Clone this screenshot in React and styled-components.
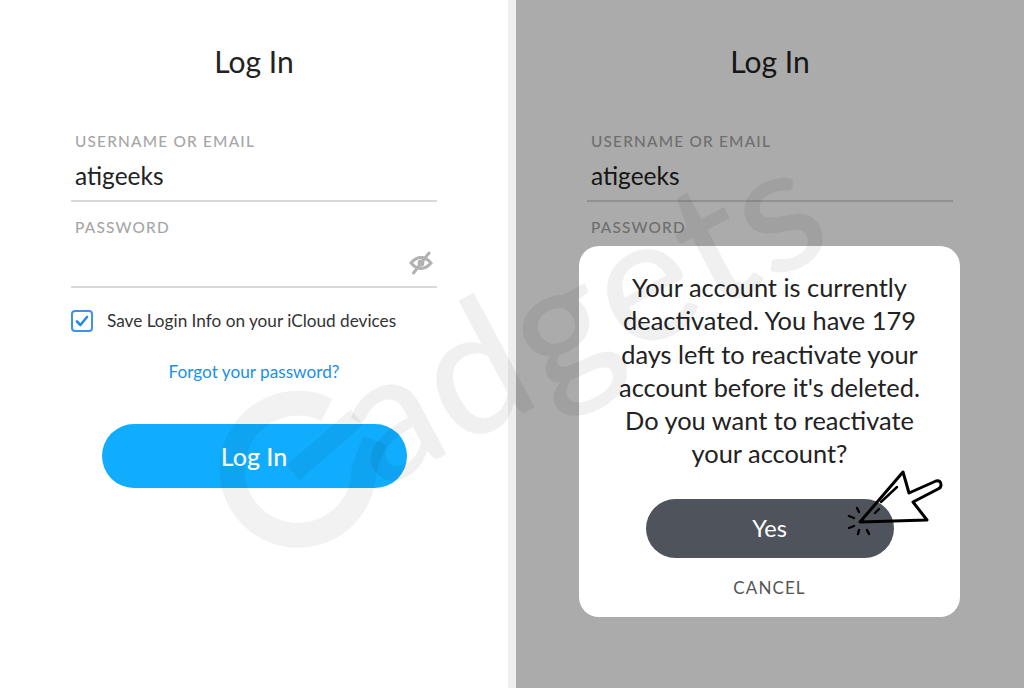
import React from 'react'
import styled,{createGlobalStyle} from 'styled-components'

const Global = createGlobalStyle`
    html,body{
        margin:0;
        padding:0;
        background:#fff;
    }
    body{
        font-family:Lato,"Open Sans",sans-serif;
        color:#222;
    }
`

const Page = styled.div`
    position:relative;
    width:1024px;
    height:688px;
    overflow:hidden;
    display:grid;
    grid-template-columns:508px 8px 508px;
    background:#fff;
`

const Panel = styled.section`
    position:relative;
    height:688px;
    display:flex;
    flex-direction:column;
    align-items:center;
    padding-top:41px;
    box-sizing:border-box;
`

const Divider = styled.div`
    background:#efefef;
`

const Title = styled.h1`
    margin:0 0 50px;
    font-size:30px;
    line-height:40px;
    font-weight:400;
    color:#222;
`

const Form = styled.div`
    width:366px;
    display:flex;
    flex-direction:column;
`

const Label = styled.div`
    padding-left:4px;
    font-size:15.4px;
    line-height:20px;
    letter-spacing:1.2px;
    color:#a6a6a6;
    font-weight:500;
`

const Field = styled.div`
    height:49px;
    margin-bottom:15px;
    padding:0 4px;
    display:flex;
    align-items:center;
    justify-content:space-between;
    border-bottom:2px solid #d8d8d8;
    font-size:24.5px;
    color:#222;
`

const EyeSlot = styled.div`
    margin-left:auto;
    margin-top:3px;
    display:flex;
`

const SaveRow = styled.label`
    display:flex;
    align-items:center;
    gap:14px;
    margin-top:7px;
    font-size:17.2px;
    line-height:22px;
    color:#333;
`

const Check = styled.span`
    width:18px;
    height:18px;
    border:2px solid #3d94e6;
    border-radius:4px;
    display:flex;
    align-items:center;
    justify-content:center;
`

const Forgot = styled.a`
    margin-top:29px;
    text-align:center;
    font-size:17.2px;
    line-height:22px;
    color:#1c90e4;
`

const LoginButton = styled.button`
    align-self:center;
    width:305px;
    height:64px;
    margin-top:41px;
    border:0;
    border-radius:32px;
    background:#10adff;
    color:#fff;
    font:500 25px Lato,sans-serif;
`

const Scrim = styled.div`
    position:absolute;
    inset:0;
    background:rgba(0,0,0,.33);
`

const Dialog = styled.div`
    position:absolute;
    left:63px;
    top:246px;
    width:381px;
    height:371px;
    border-radius:20px;
    background:#fff;
    display:flex;
    flex-direction:column;
    align-items:center;
    padding-top:25px;
    box-sizing:border-box;
`

const Message = styled.p`
    margin:0;
    text-align:center;
    font-size:25.4px;
    line-height:33.3px;
    color:#222;
`

const YesButton = styled.button`
    width:248px;
    height:59px;
    margin-top:28px;
    border:0;
    border-radius:30px;
    background:#4f545c;
    color:#fff;
    font:400 23.5px Lato,sans-serif;
`

const Cancel = styled.div`
    margin-top:19px;
    font-size:17px;
    line-height:22px;
    letter-spacing:1.1px;
    color:#555;
`

const Pointer = styled.svg`
    position:absolute;
    left:845px;
    top:468px;
`

const Watermark = styled.div`
    position:absolute;
    inset:0;
    pointer-events:none;
`

const WatermarkRing = styled.svg`
    position:absolute;
    left:212px;
    top:378px;
`

const WatermarkText = styled.div`
    position:absolute;
    left:388px;
    top:332px;
    font-size:176px;
    line-height:176px;
    font-weight:500;
    letter-spacing:2px;
    color:rgba(0,0,0,.06);
    transform:rotate(-28deg);
    transform-origin:0 100%;
    white-space:nowrap;
`

const EyeOff = () => (
    <svg width="24" height="24" viewBox="0 0 24 24" fill="none" stroke="#b2b2b2" strokeWidth="3" strokeLinecap="round">
        <path d="M2 12C5.5 8 8.6 6.6 12 6.6S18.500 8 22 12C18.500 16 15.400 17.400 12 17.400S5.500 16 2 12Z"/>
        <circle cx="12" cy="12" r="3.4" fill="#b2b2b2" stroke="none"/>
        <path d="M20 2L4.500 22"/>
    </svg>
)

const LoginForm = () => (
    <>
        <Title>Log In</Title>
        <Form>
            <Label>USERNAME OR EMAIL</Label>
            <Field>atigeeks</Field>
            <Label>PASSWORD</Label>
            <Field>
                <EyeSlot><EyeOff/></EyeSlot>
            </Field>
            <SaveRow>
                <Check>
                    <svg width="14" height="12" viewBox="0 0 14 12" fill="none" stroke="#2a8be6" strokeWidth="2.6" strokeLinecap="round" strokeLinejoin="round">
                        <path d="M2 6.500L5.400 10L12 2"/>
                    </svg>
                </Check>
                Save Login Info on your iCloud devices
            </SaveRow>
            <Forgot>Forgot your password?</Forgot>
            <LoginButton>Log In</LoginButton>
        </Form>
    </>
)

const App = () => {
    return(
        <React.Fragment>
            <Global/>
            <Page>
                <Panel>
                    <LoginForm/>
                </Panel>
                <Divider/>
                <Panel>
                    <LoginForm/>
                    <Scrim/>
                    <Dialog>
                        <Message>
                            Your account is currently<br/>
                            deactivated. You have 179<br/>
                            days left to reactivate your<br/>
                            account before it's deleted.<br/>
                            Do you want to reactivate<br/>
                            your account?
                        </Message>
                        <YesButton>Yes</YesButton>
                        <Cancel>CANCEL</Cancel>
                    </Dialog>
                </Panel>
                <Pointer width="100" height="70" viewBox="845 468 100 70" fill="none" stroke="#000" strokeWidth="2.4" strokeLinecap="round" strokeLinejoin="round">
                    <path strokeWidth="3" d="M860 522L903 472L909 493L936 481Q941 480 941 485Q941 488 938 489L913 502L927 520Z"/>
                    <path d="M881 502L897 487M875 513L879 509"/>
                    <path d="M857 508L859 512M849 516L854 518M849 528L854 526M858 534L859 530M869 534L867 530"/>
                </Pointer>
                <Watermark>
                    <WatermarkRing width="190" height="180" viewBox="0 0 190 180" fill="none" stroke="rgba(0,0,0,.05)" strokeWidth="25">
                        <path d="M115 32A66 66 0 1 0 152 91L163 62"/>
                        <path strokeWidth="20" d="M81 95L145 39"/>
                    </WatermarkRing>
                    <WatermarkText>adgets</WatermarkText>
                </Watermark>
            </Page>
        </React.Fragment>
    )
}

export default App
